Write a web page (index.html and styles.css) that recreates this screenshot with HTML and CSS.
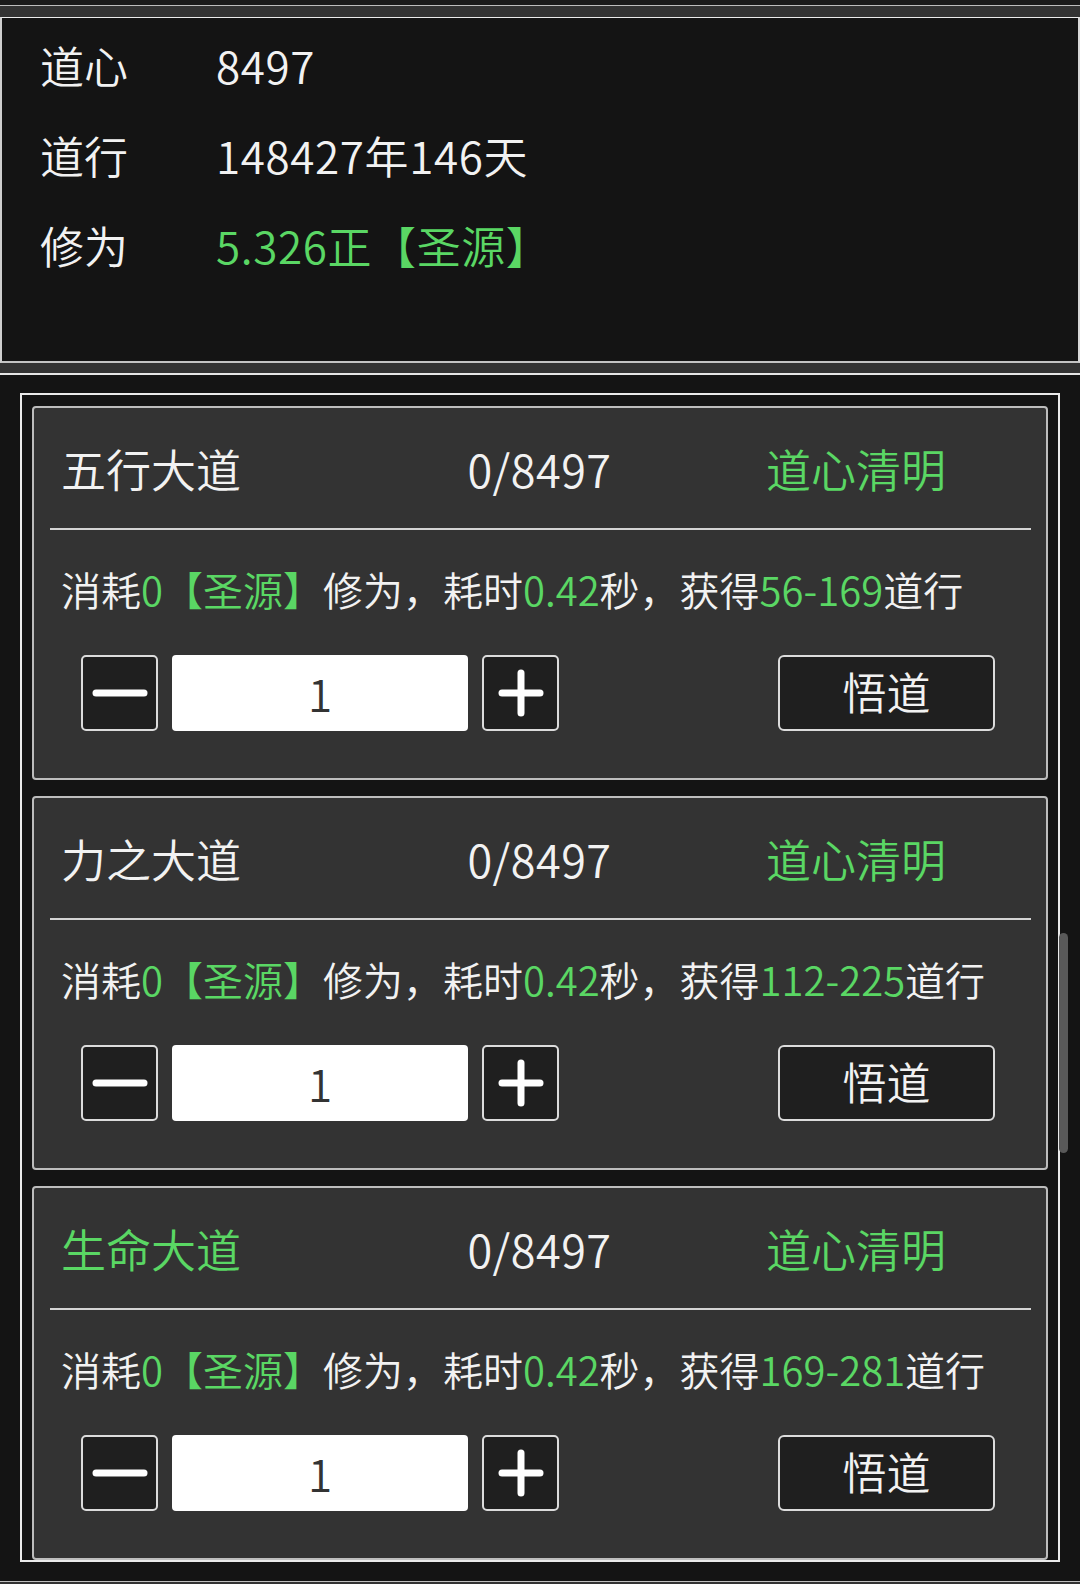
FILE: index.html
```html
<!DOCTYPE html>
<html lang="zh-CN">
<head>
<meta charset="utf-8">
<title>悟道</title>
<link rel="stylesheet" href="styles.css">
</head>
<body>
<div class="stub"></div>
<section class="stats">
  <div class="stat-row"><span class="label">道心</span><span class="value">8497</span></div>
  <div class="stat-row"><span class="label">道行</span><span class="value">148427年146天</span></div>
  <div class="stat-row"><span class="label">修为</span><span class="value green">5.326正【圣源】</span></div>
</section>
<section class="main">
  <div class="list">
    <div class="card">
      <div class="card-head">
        <span class="title">五行大道</span>
        <span class="count">0/8497</span>
        <span class="status green">道心清明</span>
      </div>
      <p class="desc">消耗<span class="green">0【圣源】</span>修为，耗时<span class="green">0.42</span>秒，获得<span class="green">56-169</span>道行</p>
      <div class="controls">
        <button class="step"><svg viewBox="0 0 60 60" width="60" height="60"><line x1="6" y1="30" x2="54" y2="30"/></svg></button>
        <div class="qty">1</div>
        <button class="step"><svg viewBox="0 0 60 60" width="60" height="60"><line x1="11" y1="30" x2="49" y2="30"/><line x1="30" y1="10" x2="30" y2="50"/></svg></button>
        <button class="go">悟道</button>
      </div>
    </div>
    <div class="card">
      <div class="card-head">
        <span class="title">力之大道</span>
        <span class="count">0/8497</span>
        <span class="status green">道心清明</span>
      </div>
      <p class="desc">消耗<span class="green">0【圣源】</span>修为，耗时<span class="green">0.42</span>秒，获得<span class="green">112-225</span>道行</p>
      <div class="controls">
        <button class="step"><svg viewBox="0 0 60 60" width="60" height="60"><line x1="6" y1="30" x2="54" y2="30"/></svg></button>
        <div class="qty">1</div>
        <button class="step"><svg viewBox="0 0 60 60" width="60" height="60"><line x1="11" y1="30" x2="49" y2="30"/><line x1="30" y1="10" x2="30" y2="50"/></svg></button>
        <button class="go">悟道</button>
      </div>
    </div>
    <div class="card">
      <div class="card-head">
        <span class="title green">生命大道</span>
        <span class="count">0/8497</span>
        <span class="status green">道心清明</span>
      </div>
      <p class="desc">消耗<span class="green">0【圣源】</span>修为，耗时<span class="green">0.42</span>秒，获得<span class="green">169-281</span>道行</p>
      <div class="controls">
        <button class="step"><svg viewBox="0 0 60 60" width="60" height="60"><line x1="6" y1="30" x2="54" y2="30"/></svg></button>
        <div class="qty">1</div>
        <button class="step"><svg viewBox="0 0 60 60" width="60" height="60"><line x1="11" y1="30" x2="49" y2="30"/><line x1="30" y1="10" x2="30" y2="50"/></svg></button>
        <button class="go">悟道</button>
      </div>
    </div>
  </div>
  <div class="thumb"></div>
</section>
</body>
</html>
```
FILE: styles.css
```css
* { box-sizing: border-box; }
html, body { margin: 0; padding: 0; }
body {
  background: #333333;
  width: 1080px;
  height: 1584px;
  overflow: hidden;
  font-family: "Noto Sans CJK SC", "Noto Sans", sans-serif;
  font-weight: 350;
  color: #f2f2f2;
}
.green { color: #5ad764; }

.stub {
  height: 6px;
  background: #1a1a1a;
  border-bottom: 1px solid #bdbdbd;
  margin-bottom: 11px;
}

.stats {
  height: 346px;
  background: #141414;
  border-top: 1px solid #ececec;
  border-bottom: 2px solid #c4c4c4;
  border-left: 2px solid #cfcfcf;
  border-right: 2px solid #d8d8d8;
  padding: 2px 0 0 38px;
  margin-bottom: 10px;
}
.stat-row {
  display: grid;
  grid-template-columns: 176px auto;
  font-size: 44px;
  line-height: 90px;
  height: 90px;
}
.stat-row .value { letter-spacing: 0.6px; }

.main {
  position: relative;
  background: #141414;
  border-top: 2px solid #e6e6e6;
  border-bottom: 1px solid #bdbdbd;
  padding: 18px 20px 19px 20px;
}
.list {
  width: 1040px;
  border: 2px solid #ebebeb;
  padding: 11px 10px 0 10px;
}
.card {
  background: #333333;
  border: 2px solid #bdbdbd;
  border-radius: 4px;
  padding: 0 15px 47px 16px;
  margin-bottom: 16px;
}
.card:last-child { margin-bottom: 0; }
.card-head {
  height: 122px;
  padding-top: 1px;
  display: grid;
  grid-template-columns: 1fr 1fr 1fr;
  align-items: center;
  font-size: 45px;
  border-bottom: 2px solid #d4d4d4;
}
.title { padding-left: 11px; }
.count { text-align: center; padding-right: 2px; letter-spacing: 0.5px; }
.status { padding-left: 62px; }

.desc {
  margin: 31px 0 0 0;
  padding-left: 11px;
  font-size: 40px;
  line-height: 56px;
  white-space: nowrap;
}

.controls {
  display: flex;
  align-items: center;
  margin-top: 38px;
  padding: 0 36px 0 31px;
  gap: 14px;
  height: 76px;
}
.step {
  width: 77px;
  height: 76px;
  padding: 0;
  background: #1f1f1f;
  border: 2px solid #dcdcdc;
  border-radius: 5px;
  display: flex;
  align-items: center;
  justify-content: center;
}
.step svg { display: block; }
.step line {
  stroke: #ffffff;
  stroke-width: 7;
  stroke-linecap: round;
}
.qty {
  width: 296px;
  height: 76px;
  background: #ffffff;
  border-radius: 4px;
  color: #333333;
  font-size: 44px;
  line-height: 76px;
  text-align: center;
}
.go {
  margin-left: auto;
  width: 217px;
  height: 76px;
  background: #1f1f1f;
  border: 2px solid #dcdcdc;
  border-radius: 6px;
  color: #f2f2f2;
  font-family: "Noto Sans CJK SC", sans-serif;
  font-weight: 350;
  font-size: 44px;
  line-height: 1;
  padding: 0 0 4px 0;
}

.thumb {
  position: absolute;
  left: 1059px;
  top: 558px;
  width: 9px;
  height: 220px;
  border-radius: 5px;
  background: #595959;
}
```
